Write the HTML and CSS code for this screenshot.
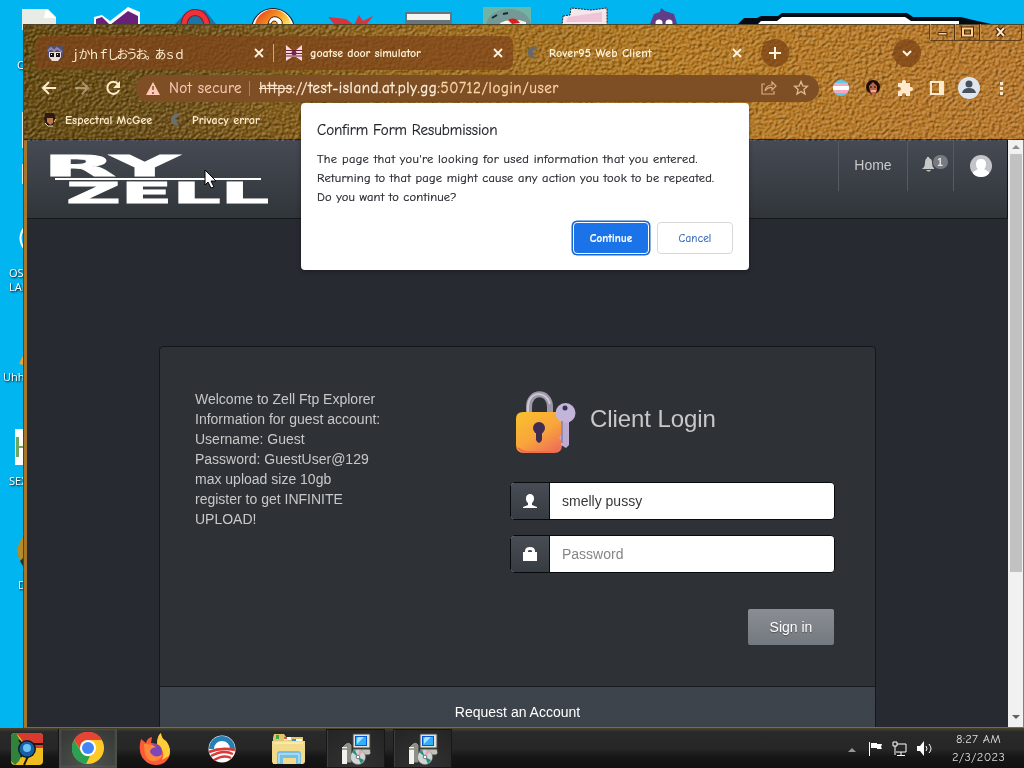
FILE: index.html
```html
<!DOCTYPE html>
<html lang="en">
<head>
<meta charset="utf-8">
<title>Rover95 Web Client</title>
<link rel="stylesheet" href="styles.css">
</head>
<body>
<div class="desktop">
  <svg class="wallpaper" width="1024" height="728" viewBox="0 0 1024 728">
    <defs>
      <linearGradient id="orb" x1="0" y1="0" x2="1" y2="1"><stop offset="0" stop-color="#e52a18"/><stop offset=".4" stop-color="#f69b20"/><stop offset=".7" stop-color="#fff26c"/></linearGradient>
    </defs>
    <path d="M22 9h26l8 8v13H22z" fill="#e9ece6"/><path d="M46 9l10 9H44z" fill="#fff"/>
    <path d="M94 17l8-2 8 6 18-14 12 5v20H94z" fill="#fff"/><path d="M96 19l6-2 8 8 18-14 10 5v12H96z" fill="#68217a"/>
    <path d="M175 24l12-12 18-2 11 14z" fill="#1976a5"/><path d="M184 26c0-18 22-18 23 0" fill="none" stroke="#8d1820" stroke-width="7"/><path d="M184 26c0-18 22-18 23 0" fill="none" stroke="#f1313a" stroke-width="5"/>
    <circle cx="273" cy="30" r="22" fill="#2a1420"/><circle cx="273" cy="30" r="21" fill="#fff"/><circle cx="273" cy="28" r="18.500" fill="url(#orb)"/><path d="M268 24q2-9 9-7 8 3 4 11h-5q3-7-2-7-2 0-3 3z" fill="#fff" stroke="#4b1d18"/>
    <path d="M328 17l18 2 8 6 5-10 4 6 10-5-6 8h-33z" fill="#d9343d"/>
    <path d="M405 12h47v12h-47z" fill="#68757b"/><path d="M407 14h43v6h-43z" fill="#f4f4f3"/>
    <path d="M483 7h48v18h-48z" fill="#6fb5a6"/><path d="M486 24q4-15 25-15 17 2 20 15z" fill="#759997"/><path d="M492 18l5-3M503 14l5-1" stroke="#102d33" stroke-width="2"/><path d="M500 23q12-6 26-1v3h-25z" fill="#f4f6f4"/><path d="M508 20q7-4 12 3l-8 1z" fill="#dc1f1c"/>
    <path d="M563 16l7-1 1-7 20 2 16-2v17h-45z" fill="#f4e7ec" stroke="#222" stroke-dasharray="2 1"/><path d="M568 17l34-5v10h-36z" fill="#f0c4d7"/>
    <path d="M650 24l4-10 6-2 1-4 4 3 9 3 3 10z" fill="#623d87"/><circle cx="659" cy="23" r="3.500" fill="#fff"/><circle cx="669" cy="23" r="3.500" fill="#fff"/>
    <path d="M738 24l6-6h13l4-2h17l4-3h125l6 4h48l12 3 18 4z" fill="#020c17"/><path d="M758 24l3-3h16l5-4h123l6 4h48v3z" fill="#fff"/>
    <path d="M22 112h3v36h-3zM22 164h3v20h-3z" fill="#dce7e8"/><path d="M25 227q-9 11 0 23" fill="none" stroke="#fff" stroke-width="2"/>
    <path d="M19 364l5-11v12z" fill="#efa02d"/><path d="M15 429h9v36h-9z" fill="#fff"/><path d="M16 437h3v9h5v2h-5v9h-3z" fill="#70a75c"/><path d="M24 536q-13 14 0 31z" fill="#b58c26"/><path d="M20 561l4-4v11z" fill="#25313d"/>
  </svg>
  <span class="shortcut s1">C</span><span class="shortcut s2">OS<br>LAI</span><span class="shortcut s3">Uhh</span><span class="shortcut s4">SEX</span><span class="shortcut s5">D</span>

  <main class="window">
    <div class="chrome">
      <svg class="leather" width="1001" height="116">
        <filter id="grain" x="0" y="0" width="100%" height="100%" color-interpolation-filters="sRGB">
          <feTurbulence type="fractalNoise" baseFrequency=".3 .34" numOctaves="3" seed="8" result="n"/>
          <feDiffuseLighting in="n" surfaceScale="1.7" diffuseConstant=".72" lighting-color="#fff"><feDistantLight azimuth="225" elevation="46"/></feDiffuseLighting>
        </filter><rect width="1001" height="116" filter="url(#grain)"/>
      </svg>
      <div class="caption"><span class="cap"><svg width="25" height="16"><path d="M8 8.500h9v2.500H8z" fill="#ffd18c" stroke="#4e2c0b"/></svg></span><span class="cap"><svg width="25" height="16"><path d="M8 4.500h9v7H8z" fill="none" stroke="#42230b" stroke-width="4"/><path d="M8 4.500h9v7H8z" fill="none" stroke="#ffd18c" stroke-width="2"/></svg></span><span class="cap closecap"><svg width="41" height="16"><path d="M17 4l7 8m0-8l-7 8" stroke="#42230b" stroke-width="4.500"/><path d="M17 4l7 8m0-8l-7 8" stroke="#ffe4c0" stroke-width="2"/></svg></span></div>
      <div class="tabs">
        <div class="tab first"><svg class="fav" width="18" height="18" viewBox="0 0 18 18"><path d="M1 1l4 2q4-3 8 0l4-2v8q0 8-8 8T1 9z" fill="#505071"/><path d="M3 8h12v5l-3 4H6l-3-4z" fill="#f1ded2"/><path d="M4 9h4v4H4zm6 0h4v4h-4z" fill="#17131e"/><path d="M5 10h1v1H5zm6 0h1v1h-1z" fill="#fff"/><path d="M2 7l3-3 3 3 3-3 5 4" stroke="#8c83b5" stroke-width="2" fill="none"/></svg><span class="tabtext jp">ｊかｈｆしおうお。あｓｄ</span><svg class="x" width="10" height="10"><path d="M1 1l8 8M9 1L1 9"/></svg></div>
        <div class="tab second"><svg class="fav" width="16" height="16" viewBox="0 0 16 16"><path d="M0 0l6 5h4l6-5v16l-6-4H6l-6 4z" fill="#fad8dd"/><path d="M0 5.500h16M0 8.500h16M0 11h16" stroke="#6c2039"/><circle cx="8" cy="8" r="2.500" fill="#762849"/></svg><span class="tabtext t2">goatse door simulator</span><svg class="x" width="10" height="10"><path d="M1 1l8 8M9 1L1 9"/></svg></div>
        <div class="tab third"><svg class="globe" width="13" height="14"><path d="M11 2A6 6 0 1 0 9 12L6 9l3-2-4-1 2-2z" fill="#66686a"/></svg><span class="tabtext t3">Rover95 Web Client</span><svg class="x" width="10" height="10"><path d="M1 1l8 8M9 1L1 9"/></svg></div>
        <span class="round plus"><svg width="14" height="14"><path d="M7 1v12M1 7h12"/></svg></span><span class="round down"><svg width="12" height="12"><path d="M2 4l4 4 4-4"/></svg></span>
      </div>
      <div class="toolbar">
        <svg class="nav" width="96" height="24" viewBox="0 0 96 24"><g fill="none" stroke="#ffedcb" stroke-width="2"><path d="M20 12H7m6-6l-6 6 6 6"/><path opacity=".45" d="M39 12h13m-6-6l6 6-6 6"/><path d="M82 8a6 6 0 1 0 1 6"/></g><path d="M84 5v7h-7z" fill="#ffedcb"/></svg>
        <div class="address"><svg width="14" height="13"><path d="M7 0l7 13H0z" fill="#ffc8b7"/><path d="M7 4v4m0 2v2" stroke="#7e4f24" stroke-width="1.500"/></svg><span class="unsafe">Not secure</span><i></i><span class="url"><s>https</s>://<b>test-island.at.ply.gg</b><em>:50712/login/user</em></span><svg class="share" width="17" height="16" fill="none" stroke="#d8ae80" stroke-width="1.200"><path d="M4 4H1v10h12v-3M4 11q1-6 7-6V2l4 4-4 4V7.500Q7 7 4 11z"/></svg><svg class="star" width="16" height="16"><path d="M8 1.500l1.800 4.400 4.700.4-3.600 3.100 1.100 4.600L8 11.500 4 14l1.100-4.600-3.600-3.100 4.700-.4z" fill="none" stroke="#e1bb91" stroke-width="1.300"/></svg></div>
        <svg class="extensions" width="205" height="26" viewBox="819 75 205 26">
          <defs><clipPath id="flag"><circle cx="841" cy="88" r="8"/></clipPath></defs>
          <g clip-path="url(#flag)"><path d="M833 80h16v16h-16z" fill="#5dcaeb"/><path d="M833 83h16v10h-16z" fill="#f5a9bd"/><path d="M833 86h16v4h-16z" fill="#fff"/></g>
          <circle cx="873" cy="87" r="7" fill="#1a0d09"/><path d="M869 86l4-4 4 4v5l-3 5-4-4z" fill="#bc6446"/><path d="M870 87h2m2 0h2" stroke="#170b08"/><path d="M871 91h5" stroke="#fff"/>
          <path d="M898 83h4v-1a2 2 0 0 1 4 0v1h4v4h1a2 2 0 0 1 0 4h-1v5h-4v-1a2 2 0 0 0-4 0v1h-4v-5h1a2 2 0 0 0 0-4h-1z" fill="#ffe9cd"/>
          <path d="M931 82h12v12h-12z" fill="none" stroke="#ffe9cd" stroke-width="2"/><path d="M939 81h5v14h-5z" fill="#ffe9cd"/>
          <circle cx="969" cy="88" r="11" fill="#dfe6f0"/><circle cx="969" cy="84" r="3.500" fill="#48515b"/><path d="M962 93q1-5 7-5t7 5z" fill="#48515b"/><path d="M1000 82h3v3h-3zm0 5h3v3h-3zm0 5h3v3h-3z" fill="#ffe9cd"/>
        </svg>
      </div>
      <div class="bookmarks"><svg width="14" height="15"><path d="M2 1h9l2 7-4 6H5L1 8z" fill="#311910"/><path d="M4 6h6v5l-3 2-3-3z" fill="#b77a51"/><path d="M11 10l2-3M2 11l3 3h5" stroke="#eee0b8"/></svg><span class="bk1">Espectral McGee</span><svg class="bkglobe" width="13" height="14"><path d="M11 2A6 6 0 1 0 9 12L6 9l3-2-4-1 2-2z" fill="#6d6e6a"/></svg><span class="bk2">Privacy error</span></div>
    </div>

    <div class="viewport">
      <section class="webpage">
        <header>
          <svg class="logo" width="225" height="55" viewBox="0 0 225 55"><text x="-5" y="23" textLength="136" lengthAdjust="spacingAndGlyphs">RY</text><text x="18" y="50" textLength="203" lengthAdjust="spacingAndGlyphs">ZELL</text><path d="M7 25h206v2H7z" fill="#fff"/></svg>
          <nav><span class="home">Home</span><span class="alerts"><svg width="14" height="15"><path d="M2 11q2-1 2-6 0-3 2-4V0h2v1q3 1 3 4 0 5 2 6v1H1zM5 13h5q-2 3-5 0" fill="#c8c8c8"/></svg><b>1</b></span><span class="avatar"><svg width="22" height="22"><defs><clipPath id="av"><circle cx="11" cy="11" r="11"/></clipPath></defs><g clip-path="url(#av)"><path d="M0 0h22v22H0z" fill="#c3c4c9"/><path d="M11 4q5 0 5 5 0 4-2 5l5 3v5H3v-5l5-3q-2-1-2-5 0-5 5-5z" fill="#fff"/></g></svg></span></nav>
        </header>
        <section class="panel">
          <div class="panel-body">
            <p>Welcome to Zell Ftp Explorer<br>Information for guest account:<br>Username: Guest<br>Password: GuestUser@129<br>max upload size 10gb<br>register to get INFINITE<br>UPLOAD!</p>
            <form>
              <h1><svg width="64" height="64" viewBox="0 0 64 64"><defs><linearGradient id="gold" x2=".7" y2="1"><stop stop-color="#fac12e"/><stop offset=".6" stop-color="#f8a53b"/><stop offset="1" stop-color="#ef7455"/></linearGradient></defs><path d="M14 24v-8c0-17 21-17 21 0v8" fill="none" stroke="#9c98a7" stroke-width="6"/><path d="M13 23v-8C14-1 32 0 35 13" fill="none" stroke="#ccc8d3" stroke-width="2"/><path d="M1 28q0-7 7-7h33q6 0 6 6v27q0 8-8 8H9q-8 0-8-8z" fill="url(#gold)"/><path d="M3 57q4 4 10 4h23q6 0 7-5" fill="none" stroke="#f36d47" stroke-width="2"/><path d="M46 29h8v25l-3 3-5-3v-5l-2-2 2-3z" fill="#bcacd1"/><circle cx="50.500" cy="22" r="10" fill="#c3b5d7"/><circle cx="50" cy="17" r="2.500" fill="#3a3250"/><path d="M47 30v22" stroke="#988aac" stroke-width="2"/><circle cx="24" cy="37" r="6" fill="#402c50"/><path d="M21 40h6v9q-3 6-6 0z" fill="#402c50"/></svg><span>Client Login</span></h1>
              <div class="field"><span><svg width="16" height="16"><path d="M8 1c5 0 5 7 2 9v2l5 2v1H1v-1l5-2v-2C3 8 3 1 8 1z"/></svg></span><input value="smelly pussy" aria-label="Username"></div>
              <div class="field"><span><svg width="16" height="16"><path d="M1 6h2V5q0-4 5-4t5 4v1h2v9H1zm5 0h4V5q0-1-2-1T6 5z"/></svg></span><input placeholder="Password" aria-label="Password"></div>
              <button class="signin" type="button">Sign in</button>
            </form>
          </div>
          <footer>Request an Account</footer>
        </section>
      </section>
      <div class="scrollbar"><i class="up"></i><span></span><i class="dn"></i></div>
    </div>
  </main>

  <div class="dialog" role="dialog"><h2>Confirm Form Resubmission</h2><p><span class="d1">The page that you're looking for used information that you entered.</span><br><span class="d2">Returning to that page might cause any action you took to be repeated.</span><br><span class="d3">Do you want to continue?</span></p><div class="actions"><button class="continue">Continue</button><button class="cancel">Cancel</button></div></div>

  <svg class="cursor" width="13" height="20"><path d="M1 1v15l3-3 3 6 3-1-3-6h5z" fill="#fff" stroke="#000"/></svg>

  <div class="taskbar">
    <span class="task"><svg width="34" height="34"><rect x="1" y="1" width="32" height="32" rx="4" fill="#efbd20"/><path d="M5 1h24q4 0 4 4v11H18L8 3z" fill="#d93a2d"/><path d="M1 5q0-4 5-4l9 16-6 12-4 4-4-4z" fill="#31823a"/><path d="M9 8l6 8-4 9M20 12h13M19 22l-5 11" stroke="#161b15" stroke-width="2" fill="none"/><circle cx="17" cy="17" r="9" fill="#101b28"/><circle cx="17" cy="17" r="7.500" fill="#1760a6"/><circle cx="17" cy="16" r="4" fill="#6cc4f5"/></svg></span>
    <span class="task active"><svg width="32" height="32"><circle cx="16" cy="16" r="16" fill="#ffca28"/><path d="M2 8A16 16 0 0 1 30 8H16q-7 0-8 9z" fill="#e84435"/><path d="M2 8l8 13q3 4 8 3l-4 8A16 16 0 0 1 2 8" fill="#2ca154"/><circle cx="16" cy="16" r="8" fill="#fff"/><circle cx="16" cy="16" r="6" fill="#4285f4"/></svg></span>
    <span class="task firefox"><svg width="32" height="32"><path d="M2 6l5 4q1-5 6-6l-1 6 6 1q0-8 4-11 0 5 5 8 6 8 3 16-4 8-13 8T3 24Q-1 17 2 6z" fill="#ff5938"/><path d="M18 11q0-8 4-11 0 5 5 8 6 8 3 15l-7 4q4-9-5-16" fill="#ffce37"/><circle cx="16" cy="18" r="7" fill="#7d47bb"/><path d="M5 11q9 0 12 3-6 1-6 5 4 7 12 3-2 7-10 6T5 11" fill="#ff8839"/></svg></span>
    <span class="task obama"><svg width="28" height="28"><circle cx="14" cy="14" r="13.500" fill="#fff"/><path d="M1 14a13 13 0 0 1 26 0h-5a8 8 0 0 0-16 0z" fill="#2680b5"/><path d="M1 17q12-5 26-2M3 21q12-7 22-2M6 25q10-6 17-2" fill="none" stroke="#d93c37" stroke-width="2.500"/></svg></span>
    <span class="task explorer"><svg width="34" height="32"><path d="M1 5l1-4h10l2 3h17v27H1z" fill="#dec56a"/><path d="M4 2h3v4H4z" fill="#45a749"/><path d="M12 4h7v3h-7z" fill="#fff"/><path d="M12 4h3v2h-3z" fill="#dc5949"/><path d="M21 6h9v3h-9z" fill="#fff"/><path d="M20 6h4v3h-4z" fill="#428ecd"/><path d="M0 8h12l2-2 2 2h17v20q0 3-3 3H3q-3 0-3-3z" fill="#f2dc8b"/><path d="M2 10h29" stroke="#fff7c8"/><path d="M5 31V21q0-3 3-3h18q3 0 3 3v10h-5v-6H11v6z" fill="#76bfe2"/><path d="M7 30v-9h20v9" fill="none" stroke="#d2f2ff"/></svg></span>
    <span class="task installer"><svg width="30" height="32"><use href="#disc-machine"/></svg></span>
    <span class="task installer second-installer"><svg width="30" height="32"><g id="disc-machine"><path d="M1 14l4-4 3-1 3 3v18H1z" fill="#8e8f86" stroke="#252622"/><path d="M1 14h5v17H1z" fill="#f2f2ef"/><path d="M1 16h5" stroke="#555"/><path d="M12 1h17v14H12z" fill="#e1e1da" stroke="#454743"/><path d="M12 16h17l1 4-2 2H12z" fill="#c2c3b9" stroke="#454743"/><path d="M14 3h12v10H14z" fill="#0755d8"/><path d="M15 4h10v8H15z" fill="#35aefa"/><path d="M17 4h6l-7 7V6z" fill="#a6e4ff"/><circle cx="17" cy="24" r="7.500" fill="#d0d5d5" stroke="#777" stroke-width=".5"/><path d="M17 24l-6-5 3-2zm0 0l6 3-3 4z" fill="#268f79"/><path d="M17 24l1-7 4 2z" fill="#e2a7b8"/><circle cx="17" cy="24" r="1.800" fill="#fff" stroke="#777"/></g></svg></span>
    <div class="tray"><svg width="92" height="20"><path d="M1 13l4-4 4 4z" fill="#979797"/><g fill="#fff"><path d="M22 3h1v14h-1zM24 4h6v1h5l-1 3 1 2h-5V9h-6z"/><path d="M70 7h3l4-5v15l-4-5h-3z"/></g><g fill="none" stroke="#fff"><path d="M50 5h9v8H49M54 13v3M50 16.500h8"/><path d="M46 3h4v4h-4zM48 7v9"/><path d="M79 7q2 3 0 5M82 5q4 5 0 9"/></g></svg><time><span>8:27 AM</span><span>2/3/2023</span></time></div>
  </div>
</div>
</body>
</html>
```
FILE: styles.css
```css
* { box-sizing: border-box; }
body { margin: 0; overflow: hidden; font-family: "Liberation Sans", sans-serif; }
svg { display: block; flex-shrink: 0; }
.desktop { position: relative; width: 1024px; height: 768px; overflow: hidden; background: #00b5f0; }
.wallpaper { position: absolute; left: 0; top: 0; }
.shortcut { position: absolute; font: 11px/14px "Open Sans", sans-serif; color: #fff; text-shadow: 1px 1px 2px #000; }
.s1 { left: 17px; top: 58px; }
.s2 { left: 9px; top: 266px; }
.s3 { left: 3px; top: 370px; }
.s4 { left: 9px; top: 474px; }
.s5 { left: 18px; top: 578px; }
.window { position: absolute; left: 23px; top: 24px; width: 1001px; height: 704px; background: #282b31; border-left: 1px solid #5d4216; overflow: hidden; display: flex; flex-direction: column; }
.chrome { position: relative; height: 116px; flex-shrink: 0; background: linear-gradient(100deg, #64490f 0, #6d4f16 16%, #9a6a1c 40%, #b67a22 65%, #b9782b 100%); border-top: 1px solid #514527; border-bottom: 1px solid #3b2b18; }
.leather { position: absolute; inset: 0; mix-blend-mode: hard-light; opacity: .55; }
.caption { position: absolute; right: 2px; top: -1px; height: 17px; display: flex; border: 1px solid #604017; border-top: 0; border-radius: 0 0 3px 3px; }
.cap { width: 25px; border-right: 1px solid #4e3516; box-shadow: inset 1px 0 #c39350; }
.closecap { width: 41px; border: 0; }
.tabs { position: relative; display: flex; height: 34px; margin: 11px 0 0 11px; align-items: center; font-family: "Comic Neue", "Comic Sans MS", "Noto Sans", sans-serif; }
.tab { display: flex; align-items: center; height: 34px; color: #fff1d5; font-size: 12px; font-weight: 700; }
.first, .second { background: rgba(126, 68, 26, .72); }
.first { position: relative; width: 239px; border-radius: 7px 0 0 0; padding: 0 9px 0 11px; }
.second { width: 239px; border-radius: 0 7px 7px 0; padding: 0 10px 0 12px; }
.first::after { content: ""; position: absolute; right: 0; top: 8px; height: 18px; width: 1px; background: #d4a57d; }
.third { width: 239px; padding: 0 10px 0 14px; }
.fav { margin-right: 8px; }
.first .fav { margin-right: 5px; }
.third .globe { margin-right: 8px; }
.tabtext { white-space: nowrap; }
.jp { font-family: "Noto Sans CJK JP", sans-serif; font-weight: 400; letter-spacing: -2.5px; }
.t2 { letter-spacing: -.12px; }
.t3 { letter-spacing: .1px; margin-left: 1px; }
.x { margin-left: auto; stroke: #fff4df; stroke-width: 1.8; fill: none; }
.first .x { margin-right: 1px; }
.round { width: 28px; height: 28px; border-radius: 50%; background: rgba(126, 69, 23, .78); display: grid; place-items: center; margin-left: 9px; }
.round svg { fill: none; stroke: #fff4de; stroke-width: 2; }
.down { margin-left: 104px; }
.toolbar { position: relative; height: 28px; margin-top: 4px; display: flex; align-items: center; }
.nav { margin: 0 0 0 12px; }
.address { width: 683px; height: 27px; margin-left: 4px; padding: 0 10px 0 10px; border-radius: 14px; background: #7e4f25; display: flex; align-items: center; font: 15px "Comic Neue", "Comic Sans MS", "Noto Sans", sans-serif; color: #ffe4cd; white-space: nowrap; }
.unsafe { color: #ffc8b7; margin-left: 9px; width: 73px; letter-spacing: .42px; -webkit-text-stroke: .2px; }
.address i { width: 1px; height: 15px; background: #af805c; margin: 0 9px 0 7px; }
.url { letter-spacing: .55px; -webkit-text-stroke: .3px; }
.url b { color: #fff0dc; font-weight: normal; }
.url em { color: #ffd4a4; font-style: normal; }
.share { margin-left: auto; margin-right: 15px; }
.extensions { margin-left: 0; }
.bookmarks { position: relative; height: 35px; display: flex; align-items: center; padding-left: 19px; font: 700 12px "Comic Neue", "Comic Sans MS", "Noto Sans", sans-serif; color: #ffebcc; }
.bookmarks span { white-space: nowrap; }
.bk1 { margin-left: 8px; width: 88px; letter-spacing: 0; }
.bkglobe { margin-left: 17px; }
.bk2 { margin-left: 9px; letter-spacing: .05px; }
.viewport { min-height: 0; flex: 1; display: flex; border-left: 3px solid #a6772b; border-right: 1px solid #a97831; border-bottom: 1px solid #8c6923; }
.webpage { width: 981px; flex: none; background: #272b31; overflow: hidden; color: #c8c8c8; }
header { height: 79px; border-bottom: 1px solid #16191c; border-right: 1px solid #101215; background: linear-gradient(#464a54, #3a3f45 55%, #30353a); display: flex; }
.logo { margin: 13px 0 0 21px; overflow: visible; }
.logo text { font: 900 29px "DejaVu Sans", sans-serif; fill: #fff; stroke: #fff; stroke-width: .8; }
nav { margin-left: auto; display: flex; height: 51px; font-size: 14px; }
nav > span { display: flex; align-items: center; justify-content: center; border-left: 1px solid #565a61; }
.home { width: 69px; padding-bottom: 2px; }
.alerts { width: 46px; padding-left: 7px; padding-bottom: 2px; }
.alerts b { display: grid; place-items: center; width: 15px; height: 14px; border-radius: 7px; margin-left: -2px; margin-top: -5px; background: #777b80; color: #e4e4e4; font-size: 10px; }
.avatar { width: 54px; }
.panel { width: 717px; height: 420px; margin: 127px 0 0 132px; border: 1px solid #15171b; border-radius: 4px; background: #2e3237; }
.panel-body { display: flex; height: 340px; border-bottom: 1px solid #191c20; }
.panel p { width: 245px; margin: 42px 70px 0 35px; font-size: 14px; line-height: 20px; }
form { width: 325px; padding-top: 43px; }
h1 { height: 64px; margin: 0; display: flex; align-items: flex-start; font-size: 24px; font-weight: normal; line-height: 28px; }
h1 svg { margin: 1px 0 0 5px; }
h1 span { margin: 15px 0 0 11px; letter-spacing: -.08px; }
.field { height: 38px; display: flex; border: 1px solid #080a0c; border-radius: 4px; overflow: hidden; margin-bottom: 15px; background: #fff; }
h1 + .field { margin-top: 28px; }
.field span { width: 39px; border-right: 1px solid #090b0e; background: linear-gradient(#484d55, #373c42); display: grid; place-items: center; fill: #fff; }
.field input { flex: 1; min-width: 0; border: 0; padding: 0 12px; font: 14px "Liberation Sans", sans-serif; color: #35373a; background: transparent; outline: 0; }
.field input::placeholder { color: #858585; opacity: 1; }
.signin { display: block; margin: 36px 1px 0 auto; width: 86px; height: 36px; border: 0; border-radius: 2px; background: linear-gradient(#8a8e94, #737980); color: #fff; font: 14px "Liberation Sans", sans-serif; text-shadow: 0 1px 1px #4c5055; }
.panel footer { height: 75px; background: linear-gradient(#3e444c, #3d424a); text-align: center; padding-top: 15px; color: #fff; font-size: 14px; line-height: 20px; }
.scrollbar { width: 15px; background: #f0f1f0; padding: 0 1px 4px; display: flex; flex-direction: column; align-items: center; }
.scrollbar span { width: 12px; height: 418px; background: #c1c1c1; }
.scrollbar i { border: 4px solid transparent; }
.up { border-bottom-color: #8b8b8b !important; margin: 1px 0 5px; }
.dn { border-top-color: #59626d !important; margin-top: auto; }
.dialog { position: absolute; left: 301px; top: 103px; width: 448px; height: 167px; padding: 17px 16px; background: #fff; border-radius: 4px; box-shadow: 0 1px 4px rgba(0, 0, 0, .4); font-family: "Comic Neue", "Comic Sans MS", "Noto Sans", sans-serif; color: #202329; -webkit-text-stroke: .2px; }
.dialog h2 { margin: 0 0 9px; font-size: 15px; line-height: 20px; font-weight: normal; letter-spacing: -.05px; }
.dialog p { margin: 0; font-size: 12.5px; line-height: 19px; white-space: nowrap; padding-top: 1px; }
.d1 { letter-spacing: .32px; }
.d2 { letter-spacing: .22px; }
.d3 { letter-spacing: .18px; }
.actions { display: flex; justify-content: flex-end; gap: 8px; margin-top: 15px; }
.actions button { width: 76px; height: 32px; border-radius: 4px; font: 11px "Comic Neue", "Comic Sans MS", "Noto Sans", sans-serif; padding: 0; }
.actions .continue { background: #1a73e8; color: #fff; border: 1px solid #fff; box-shadow: 0 0 0 1.500px #1667cc; font-weight: 700; letter-spacing: .1px; }
.actions .cancel { background: #fff; color: #3869b8; border: 1px solid #d6d8dc; letter-spacing: .2px; }
.cursor { position: absolute; left: 204px; top: 169px; }
.taskbar { position: absolute; left: 0; right: 0; bottom: 0; height: 40px; display: flex; background: linear-gradient(#3e3d37 0, #292929 3px, #272727 50%, #171717 70%, #111); border-top: 1px solid #484127; }
.task { width: 74px; display: grid; place-items: center; }
.task:first-child { width: 59px; padding-right: 4px; border-right: 1px solid #131313; }
.task.active { width: 58px; background: radial-gradient(circle at 50% 100%, #515551, #333633); border: 1px solid #4b4d49; border-top: 0; box-shadow: inset 0 0 3px #666; }
.task.firefox { padding-left: 2px; }
.task.obama { width: 61px; }
.task.explorer { width: 74px; }
.task.installer { width: 59px; border: 1px solid #171717; box-shadow: inset 1px 0 #3c3c3c; background: radial-gradient(circle at 50% 100%, #343434, #242424); }
.second-installer { margin-left: 8px; }
.tray { margin-left: auto; display: flex; align-items: center; }
.tray svg { margin-right: 3px; }
time { width: 75px; display: flex; flex-direction: column; align-items: center; font: 12.5px/18px "Comic Neue", "Comic Sans MS", "Noto Sans", sans-serif; letter-spacing: .3px; color: #dedede; margin: -1px 8px 0 -1px; }
```
